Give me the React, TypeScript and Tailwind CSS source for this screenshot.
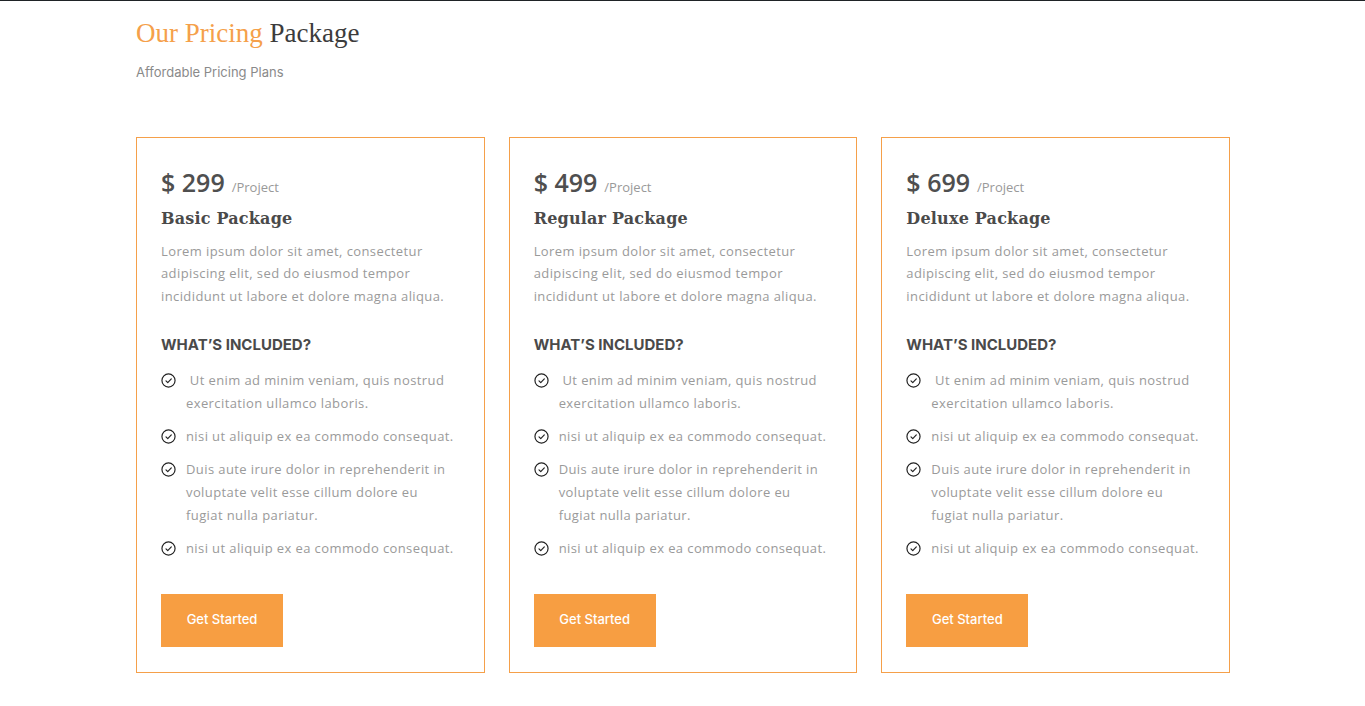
import { useState } from "react";

type Plan = {
  price: string;
  name: string;
};

const plans: Plan[] = [
  { price: "299", name: "Basic Package" },
  { price: "499", name: "Regular Package" },
  { price: "699", name: "Deluxe Package" },
];

const features = [
  " Ut enim ad minim veniam, quis nostrud exercitation ullamco laboris.",
  "nisi ut aliquip ex ea commodo consequat.",
  "Duis aute irure dolor in reprehenderit in voluptate velit esse cillum dolore eu fugiat nulla pariatur.",
  "nisi ut aliquip ex ea commodo consequat.",
];

function CheckCircle() {
  return (
    <svg width="15" height="15" viewBox="0 0 24 24" fill="none" stroke="#222" strokeWidth="1.9" strokeLinecap="round" strokeLinejoin="round" className="shrink-0 mt-[4px]">
      <circle cx="12" cy="12" r="10.5" />
      <path d="M8 12.5l2.8 2.8L16.5 9.5" />
    </svg>
  );
}

function PricingCard({ plan }: { plan: Plan }) {
  const [hover, setHover] = useState(false);

  return (
    <div className="border border-[#f5a04a] bg-white px-[24px] pt-[28px] pb-[25px]">
      <div className="flex items-baseline text-[#4f4f4f]">
        <span className="text-[25px] font-semibold font-['Open_Sans',sans-serif] leading-[32px]">$ {plan.price}</span>
        <span className="ml-[7px] text-[13px] text-[#999] font-['Open_Sans',sans-serif]">/Project</span>
      </div>
      <h3 className="mt-[9px] text-[16px] font-bold text-[#4a4a4a] font-['DejaVu_Serif',serif] tracking-[0.2px]">
        {plan.name}
      </h3>
      <p className="mt-[9px] text-[13px] leading-[22.5px] tracking-[0.4px] text-[#9a9a9a] font-['Open_Sans',sans-serif]">
        Lorem ipsum dolor sit amet, consectetur adipiscing elit, sed do eiusmod tempor incididunt ut labore et dolore magna aliqua.
      </p>
      <h4 className="mt-[27px] text-[15px] font-bold text-[#4a4a4a] font-['Inter',sans-serif]">WHAT’S INCLUDED?</h4>
      <ul className="mt-[12px] flex flex-col gap-[10px]">
        {features.map((f, i) => (
          <li key={i} className="flex gap-[10px]">
            <CheckCircle />
            <span className="whitespace-pre-wrap text-[13px] leading-[23px] tracking-[0.4px] text-[#9a9a9a] font-['Open_Sans',sans-serif] pr-[4px]">{f}</span>
          </li>
        ))}
      </ul>
      <button
        onMouseEnter={() => setHover(true)}
        onMouseLeave={() => setHover(false)}
        className={`mt-[34px] w-[122px] h-[53px] text-[13px] font-medium text-white font-['Inter',sans-serif] ${hover ? "bg-[#e88d2f]" : "bg-[#f79e42]"}`}
      >
        Get Started
      </button>
    </div>
  );
}

export default function App() {
  return (
    <div className="min-h-screen bg-white border-t border-[#1f2326]">
      <div className="w-[1094px] ml-[136px] pt-[14px]">
        <h2 className="text-[27px] leading-[36px] font-['Liberation_Serif',serif]">
          <span className="text-[#f5a04a]">Our Pricing</span> <span className="text-[#3c3c3c]">Package</span>
        </h2>
        <p className="mt-[12px] text-[13px] text-[#8a8a8a] font-['Inter',sans-serif]">Affordable Pricing Plans</p>
        <div className="mt-[54px] grid grid-cols-3 gap-[24px]">
          {plans.map((p) => (
            <PricingCard key={p.name} plan={p} />
          ))}
        </div>
      </div>
    </div>
  );
}
